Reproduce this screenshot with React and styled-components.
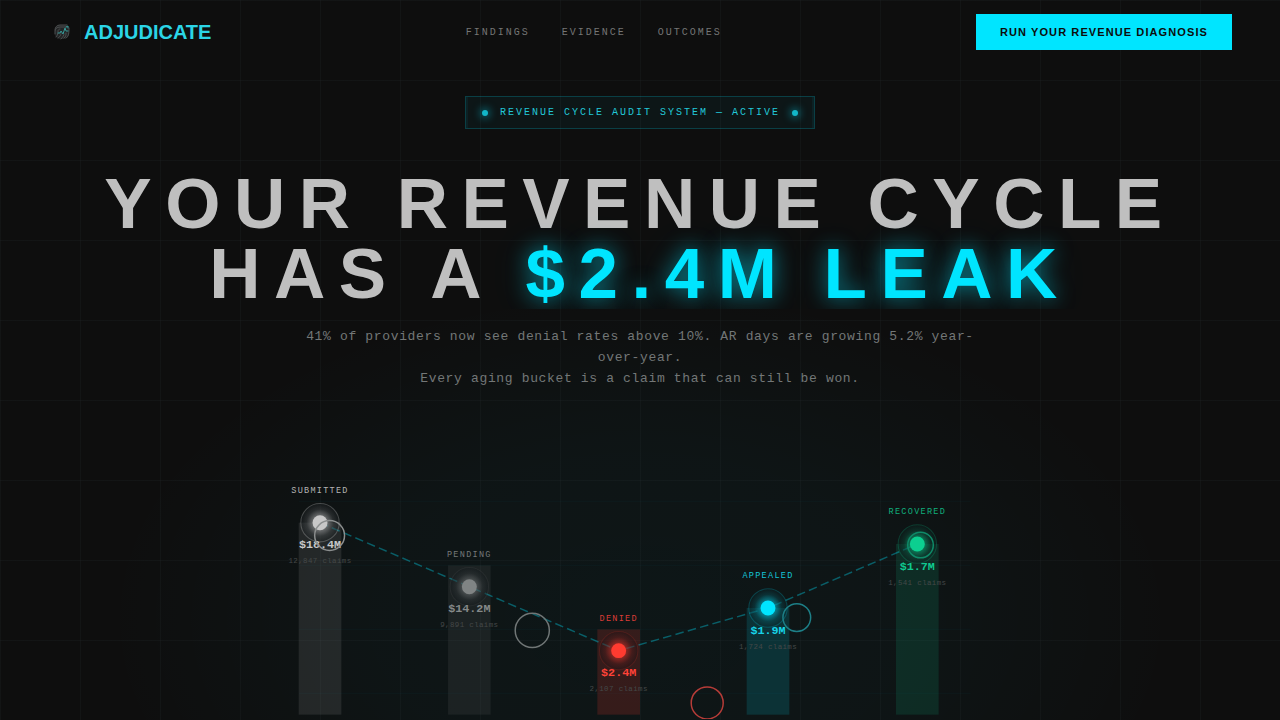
import React from 'react'
import styled, { createGlobalStyle } from 'styled-components'

const GlobalStyle = createGlobalStyle`
    body {
        margin: 0;
        background: #0d0d0d;
        font-family: "Liberation Sans", Arial, sans-serif;
    }
    * {
        box-sizing: border-box;
    }
`

const Page = styled.div`
    min-height: 100vh;
    background-color: #0e0e0e;
    background-image:
        linear-gradient(rgba(160, 220, 225, 0.03) 1px, transparent 1px),
        linear-gradient(90deg, rgba(160, 220, 225, 0.03) 1px, transparent 1px),
        radial-gradient(ellipse 42% 46% at 50% 86%, rgba(0, 229, 255, 0.04) 0%, rgba(0, 229, 255, 0.03) 50%, transparent 100%);
    background-size: 80px 80px, 80px 80px, 100% 100%;
`

const Header = styled.header`
    display: flex;
    align-items: center;
    justify-content: space-between;
    padding: 14px 48px;
`

const Brand = styled.a`
    display: flex;
    align-items: center;
    gap: 8px;
    color: #2bd5e6;
    font-size: 20px;
    font-weight: 700;
    line-height: 28px;
    text-decoration: none;
`

const Nav = styled.nav`
    display: flex;
    gap: 32px;
`

const NavLink = styled.a`
    color: #757575;
    font-family: "Liberation Mono", monospace;
    font-size: 10px;
    line-height: 17px;
    letter-spacing: 2px;
    text-decoration: none;
`

const DiagnosisButton = styled.button`
    height: 36px;
    padding: 0 24px;
    border: 0;
    background: #00e5ff;
    color: #0d0d0d;
    font-family: inherit;
    font-size: 11px;
    font-weight: 700;
    letter-spacing: 0.1em;
    cursor: pointer;
`

const Hero = styled.main`
    display: flex;
    flex-direction: column;
    align-items: center;
    padding-top: 32px;
`

const StatusBadge = styled.div`
    display: flex;
    align-items: center;
    gap: 12px;
    height: 33px;
    padding: 0 16px;
    border: 1px solid rgba(0, 229, 255, 0.2);
    background: rgba(0, 229, 255, 0.04);
    box-shadow: inset 2px 0 0 rgba(0, 229, 255, 0.06), inset -2px 0 0 rgba(0, 229, 255, 0.06);
    color: #22c8d9;
    font-family: "Liberation Mono", monospace;
    font-size: 10px;
    letter-spacing: 2px;
`

const StatusDot = styled.span`
    width: 6px;
    height: 6px;
    border-radius: 50%;
    background: #12b6c8;
    box-shadow: 0 0 8px 1px rgba(0, 229, 255, 0.6);
`

const HeroTitle = styled.h1`
    margin: 40px 0 0;
    overflow: hidden;
    align-self: stretch;
    color: #bfbfbf;
    font-size: 71px;
    font-weight: 700;
    line-height: 70px;
    letter-spacing: 0.19em;
    text-align: center;
`

const Leak = styled.span`
    color: #00e5ff;
    text-shadow: 0 0 20px rgba(0, 229, 255, 0.5), 0 0 40px rgba(0, 229, 255, 0.2);
`

const HeroText = styled.p`
    max-width: 700px;
    margin: 17px 0 27px;
    color: #737777;
    font-family: "Liberation Mono", monospace;
    font-size: 13px;
    line-height: 21px;
    letter-spacing: 0.05em;
    text-align: center;
`

const ChartSvg = styled.svg`
    display: block;
    width: 75%;
    font-family: "Liberation Mono", monospace;
    text-anchor: middle;
`

const StageLabel = styled.text`
    font-size: 8px;
    letter-spacing: 0.15em;
`

const StageValue = styled.text`
    font-size: 11px;
    font-weight: 700;
`

const StageClaims = styled.text`
    font-size: 7px;
    letter-spacing: 0.05em;
    fill: #444848;
`

const stages = [
    { label: 'SUBMITTED', value: '$18.4M', claims: '12,847 claims', x: 150, y: 100, top: 100, color: '#c8c8c8', bar: 0.12, ring: 0.3 },
    { label: 'PENDING', value: '$14.2M', claims: '9,891 claims', x: 290, y: 160, top: 140, color: '#808484', bar: 0.12, ring: 0.12 },
    { label: 'DENIED', value: '$2.4M', claims: '2,107 claims', x: 430, y: 220, top: 200, color: '#ff3b30', bar: 0.17, ring: 0.15 },
    { label: 'APPEALED', value: '$1.9M', claims: '1,724 claims', x: 570, y: 180, top: 180, color: '#00e5ff', bar: 0.14, ring: 0.22 },
    { label: 'RECOVERED', value: '$1.7M', claims: '1,541 claims', x: 710, y: 120, top: 120, color: '#0ccf90', bar: 0.13, ring: 0.22 },
]

const labelColors = ['#b4b4b4', '#747878', '#dc3c36', '#14c4d6', '#10ae7c']
const valueColors = ['#c8c8c8', '#858989', '#ff4238', '#17d3e8', '#0fc98f']

const pulses = [
    { x: 159, y: 112, r: 14, color: '#8c8f8f' },
    { x: 349, y: 201, r: 16, color: '#707676' },
    { x: 513, y: 269, r: 15, color: '#b63c38' },
    { x: 597, y: 189, r: 13, color: '#1d7f87' },
    { x: 713, y: 121, r: 12, color: '#0f8a68' },
]

const Logo = () => (
    <svg width="28" height="28" viewBox="0 0 28 28" fill="none" strokeLinecap="round" aria-hidden="true">
        <rect x="7" y="7" width="14" height="14" rx="5" fill="#232526" />
        <g stroke="#4c4f50" strokeWidth="1">
            <path d="M7 12c0-3 2-5 5-5h7" />
            <path d="M7 16v-3c0-2 2-4 5-4h8" />
            <path d="M8 19c2-2 2-4 2-6 0-1 1-2 2-2" />
            <path d="M10 20c3-2 3-4 3-5" />
            <path d="M13 21c2-2 3-4 3-5" />
            <path d="M16 20c2-1 2-3 2-5" />
            <path d="M18 20c3-2 3-5 3-10" />
        </g>
        <path d="M10 15h2l1-2 2 3 2-6 1 3h2M18 9l2-1v2" stroke="#369a98" strokeWidth="1" />
    </svg>
)

const Stage = ({ stage, index }) => (
    <g>
        <circle cx={stage.x} cy={stage.y} r="18" fill="#0d1113" fillOpacity="0.4" stroke={stage.color} strokeOpacity={stage.ring} />
        <circle cx={stage.x} cy={stage.y} r="18" fill={`url(#glow${index})`} />
        <circle cx={stage.x} cy={stage.y} r="7" fill={stage.color} />
        <StageLabel x={stage.x} y={stage.y - 28} fill={labelColors[index]}>{stage.label}</StageLabel>
        <StageValue x={stage.x} y={stage.y + 24} fill={valueColors[index]}>{stage.value}</StageValue>
        <StageClaims x={stage.x} y={stage.y + 38}>{stage.claims}</StageClaims>
    </g>
)

const RecoveryChart = () => (
    <ChartSvg viewBox="0 0 900 284" role="img" aria-label="Revenue recovery by claim stage">
        <defs>
            {stages.map((stage, i) => (
                <radialGradient id={`glow${i}`} key={stage.label}>
                    <stop offset="0.35" stopColor={stage.color} stopOpacity="0.5" />
                    <stop offset="0.7" stopColor={stage.color} stopOpacity="0.14" />
                    <stop offset="1" stopColor={stage.color} stopOpacity="0.03" />
                </radialGradient>
            ))}
        </defs>
        <g stroke="#00e5ff" strokeOpacity="0.03">
            {[80, 140, 200, 260].map(y => <line key={y} x1="130" x2="760" y1={y} y2={y} />)}
        </g>
        {stages.map(stage => (
            <rect key={stage.label} x={stage.x - 20} y={stage.top} width="40" height={280 - stage.top} fill={stage.color} fillOpacity={stage.bar} />
        ))}
        <polyline
            points={stages.map(stage => `${stage.x},${stage.y}`).join(' ')}
            fill="none"
            stroke="#00e5ff"
            strokeOpacity="0.35"
            strokeWidth="1.4"
            strokeDasharray="8 4"
        />
        {stages.map((stage, i) => <Stage key={stage.label} stage={stage} index={i} />)}
        {pulses.map(pulse => (
            <circle key={pulse.x} cx={pulse.x} cy={pulse.y} r={pulse.r} fill="none" stroke={pulse.color} strokeWidth="1.4" />
        ))}
    </ChartSvg>
)

const App = () => (
    <Page>
        <GlobalStyle />
        <Header>
            <Brand href="#top"><Logo />ADJUDICATE</Brand>
            <Nav>
                <NavLink href="#findings">FINDINGS</NavLink>
                <NavLink href="#evidence">EVIDENCE</NavLink>
                <NavLink href="#outcomes">OUTCOMES</NavLink>
            </Nav>
            <DiagnosisButton type="button">RUN YOUR REVENUE DIAGNOSIS</DiagnosisButton>
        </Header>
        <Hero>
            <StatusBadge>
                <StatusDot />
                <span>REVENUE CYCLE AUDIT SYSTEM — ACTIVE</span>
                <StatusDot />
            </StatusBadge>
            <HeroTitle>YOUR REVENUE CYCLE<br />HAS A <Leak>$2.4M LEAK</Leak></HeroTitle>
            <HeroText>
                41% of providers now see denial rates above 10%. AR days are growing 5.2% year-over-year.
                <br />
                Every aging bucket is a claim that can still be won.
            </HeroText>
            <RecoveryChart />
        </Hero>
    </Page>
)

export default App
